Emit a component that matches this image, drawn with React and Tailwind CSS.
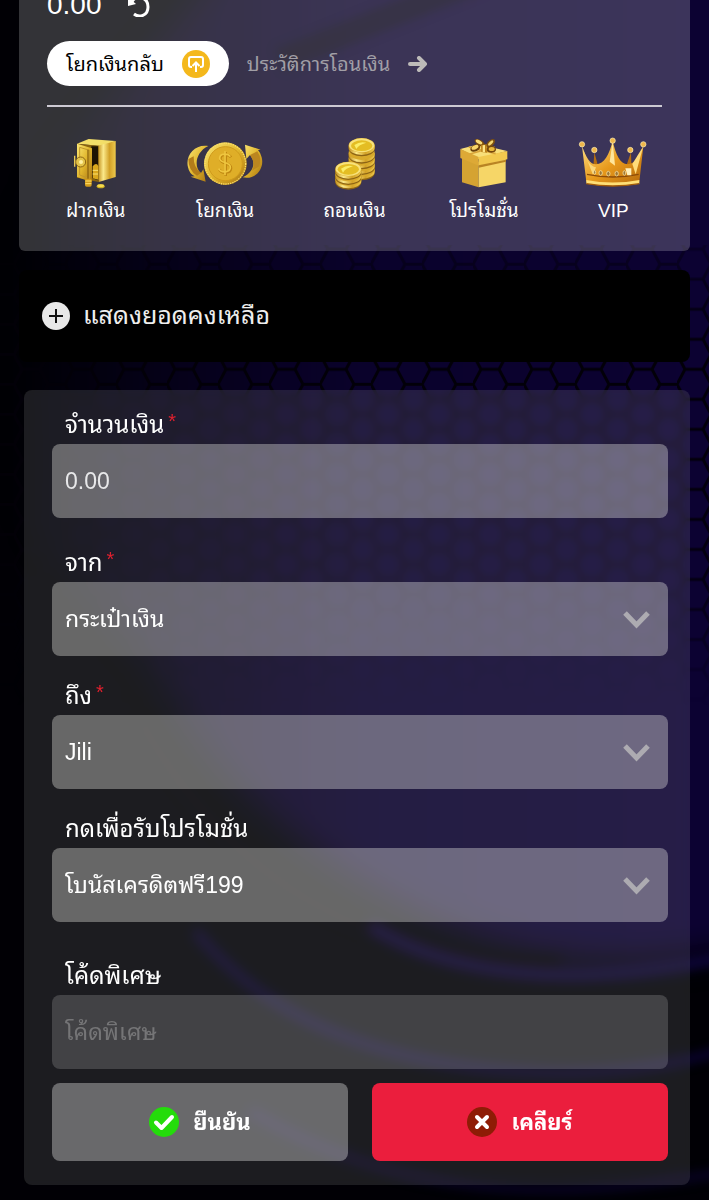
import React, { useState } from "react";

const THAI_FONT =
  "font-['Liberation_Sans','Noto_Sans_Thai_Looped','Loma','Garuda','Waree','Noto_Sans_Thai',sans-serif]";

const Backdrop = () => (
  <svg
    className="absolute inset-0 -z-10 h-full w-full"
    viewBox="0 0 709 1200"
    preserveAspectRatio="none"
    aria-hidden="true"
  >
    <defs>
      <linearGradient id="glow" gradientUnits="userSpaceOnUse" x1="20" x2="700" y1="0" y2="0">
        <stop offset="0" stopColor="#0b022f" stopOpacity="0" />
        <stop offset="0.2" stopColor="#0b022f" stopOpacity="0.45" />
        <stop offset="0.5" stopColor="#0b0230" stopOpacity="0.9" />
        <stop offset="1" stopColor="#0c0232" />
      </linearGradient>
      <linearGradient id="hexFade" x1="0" x2="0" y1="0" y2="1">
        <stop offset="0" stopColor="#fff" stopOpacity="0.3" />
        <stop offset="0.25" stopColor="#fff" />
        <stop offset="0.7" stopColor="#fff" stopOpacity="0.8" />
        <stop offset="1" stopColor="#fff" stopOpacity="0" />
      </linearGradient>
      <mask id="hexMask">
        <rect x="0" y="245" width="709" height="460" fill="url(#hexFade)" />
      </mask>
      <pattern
        id="hex"
        x="65"
        y="369"
        width="51"
        height="30"
        patternUnits="userSpaceOnUse"
      >
        <path
          d="M8 0H26L34 15L26 30H8L0 15ZM34 15H51"
          fill="none"
          stroke="#020008"
          strokeWidth="3"
        />
      </pattern>
      <filter
        id="soft"
        x="-20%"
        y="-20%"
        width="140%"
        height="140%"
        colorInterpolationFilters="sRGB"
      >
        <feGaussianBlur stdDeviation="16" />
      </filter>
      <filter
        id="soft2"
        x="-20%"
        y="-20%"
        width="140%"
        height="140%"
        colorInterpolationFilters="sRGB"
      >
        <feGaussianBlur stdDeviation="5" />
      </filter>
    </defs>
    <rect width="709" height="1200" fill="#010005" />
    <path
      d="M250 -60H780V935C640 975 520 960 420 910C300 850 215 780 150 660L20 520V200Z"
      fill="url(#glow)"
      filter="url(#soft)"
    />
    <rect width="709" height="1200" fill="url(#hex)" mask="url(#hexMask)" />
    <g fill="none" filter="url(#soft2)">
      <path d="M140 720C220 860 340 960 560 962" stroke="#020006" strokeWidth="14" />
      <path d="M280 60L480 -20" stroke="#020006" strokeWidth="24" strokeOpacity="0.5" />
      <path d="M370 925C450 975 570 990 730 955" stroke="#0c0434" strokeWidth="12" />
      <path d="M195 930C260 1010 370 1070 560 1072Q650 1072 720 1050" stroke="#08022a" strokeWidth="10" />
      <path d="M250 1110C400 1200 560 1200 720 1172" stroke="#070220" strokeWidth="10" />
    </g>
  </svg>
);

const GoldDefs = () => (
  <svg className="absolute h-0 w-0" aria-hidden="true">
    <defs>
      <linearGradient id="gold" x1="0" x2="1" y1="0" y2="1">
        <stop offset="0" stopColor="#fbe774" />
        <stop offset="0.5" stopColor="#e0b52c" />
        <stop offset="1" stopColor="#a87310" />
      </linearGradient>
      <linearGradient id="goldSide" x1="0" x2="1" y1="0" y2="0">
        <stop offset="0" stopColor="#c18e1d" />
        <stop offset="0.3" stopColor="#fbe98a" />
        <stop offset="0.65" stopColor="#d2a127" />
        <stop offset="1" stopColor="#edc94c" />
      </linearGradient>
      <linearGradient id="orange" x1="0" x2="1" y1="0" y2="1">
        <stop offset="0" stopColor="#ffe28a" />
        <stop offset="0.5" stopColor="#e89a1c" />
        <stop offset="1" stopColor="#b3670b" />
      </linearGradient>
    </defs>
  </svg>
);

const SafeIcon = () => (
  <svg className="h-[55px]" viewBox="98 35 141 165" aria-hidden="true">
    <path d="M113 58L148 44L229 50L190 66Z" fill="#f3de68" />
    <path d="M176 64L229 50V158L178 173Z" fill="url(#goldSide)" />
    <path d="M113 58L178 64V173L113 160Z" fill="#8a640f" />
    <path d="M156 66L176 66V168L156 160Z" fill="#1d1203" />
    <path d="M113 58L158 72V174L113 158Z" fill="url(#gold)" />
    <path d="M121 69L151 78V163L121 152Z" fill="none" stroke="#c2972a" strokeWidth="3" />
    <path d="M146 76V165" stroke="#8d6510" strokeWidth="4" />
    <circle cx="124" cy="113" r="15" fill="#e3c44b" stroke="#8d6510" strokeWidth="3" />
    <circle cx="125" cy="113" r="6" fill="#fff0a0" />
    <path d="M106 94V127" stroke="#e8ca55" strokeWidth="4" />
    <path d="M160 126Q172 112 177 126V166L160 162Z" fill="#daa71d" />
    <path d="M160 138H176M160 149H176" stroke="#fae174" strokeWidth="3" />
    <rect x="137" y="163" width="20" height="24" rx="5" fill="#d29c1b" />
    <path d="M138 170H156M138 178H156" stroke="#ffe26c" strokeWidth="3" />
    <ellipse cx="184" cy="186" rx="12" ry="6" fill="#ceb024" />
    <ellipse cx="184" cy="184" rx="10" ry="4" fill="#f5da4e" />
  </svg>
);

const TransferIcon = () => (
  <svg className="h-[55px]" viewBox="440 35 235 165" aria-hidden="true">
    <path
      d="M507 65C466 58 437 94 446 129Q450 149 466 156L454 157L499 172L492 135L485 146C463 129 468 83 507 65Z"
      fill="url(#gold)"
    />
    <path d="M447 104Q447 138 473 154L485 146Q462 130 463 96Z" fill="#b37d1a" />
    <path
      d="M610 159C650 168 676 131 667 99Q663 84 656 77L664 76L617 61L621 104L632 92C650 112 645 143 610 159Z"
      fill="url(#gold)"
    />
    <path d="M632 92Q650 116 638 139L660 126Q668 101 654 81Z" fill="#bb8620" />
    <circle cx="558" cy="118" r="64" fill="url(#gold)" />
    <circle cx="558" cy="118" r="61" fill="none" stroke="#f8dc68" strokeWidth="4" strokeDasharray="4 3" />
    <circle cx="558" cy="118" r="51" fill="#dfae28" stroke="#cf9a1b" strokeWidth="3" />
    <path
      d="M575 99C568 88 543 88 543 104C543 121 575 112 575 131C575 148 547 149 540 135M559 83V155"
      fill="none"
      stroke="#c08812"
      strokeWidth="8"
    />
    <path
      d="M573 97C566 86 541 86 541 102C541 119 573 110 573 129C573 146 545 147 538 133M557 81V153"
      fill="none"
      stroke="#efc63f"
      strokeWidth="5"
    />
  </svg>
);

const Coin = ({ x, y, top }) => (
  <g transform={`translate(${x} ${y})`}>
    <path d="M-39 0V8A39 22 0 0 0 39 8V0Z" fill="#8d6414" />
    <path d="M-39 -2V4A39 22 0 0 0 39 4V-2Z" fill="url(#goldSide)" />
    <ellipse cy="-3" rx="39" ry="22" fill="#d8a92b" />
    {top && <ellipse cy="-3" rx="38" ry="21" fill="#f8e27b" />}
    {top && <ellipse cy="-2" rx="32" ry="16" fill="#e4bd23" />}
    {top && <path d="M-22 -4Q-5 -16 14 -11Q-9 -5 -16 8Z" fill="#fbed67" />}
  </g>
);

const CoinsIcon = () => (
  <svg className="h-[55px]" viewBox="95 35 135 165" aria-hidden="true">
    <Coin x={184} y={138} />
    <Coin x={184} y={122} />
    <Coin x={184} y={105} />
    <Coin x={184} y={88} />
    <Coin x={184} y={66} top />
    <Coin x={144} y={166} />
    <Coin x={144} y={152} />
    <Coin x={144} y={137} top />
  </svg>
);

const GiftIcon = () => (
  <svg className="h-[55px]" viewBox="476 35 150 165" aria-hidden="true">
    <path d="M480 74L535 60L620 80L534 104Z" fill="#f8df79" />
    <path d="M485 96L535 112V189L485 174Z" fill="#d5a332" />
    <path d="M535 112L616 96V174L535 189Z" fill="#f6d667" />
    <path d="M480 74L535 98V124L480 101Z" fill="#dda936" />
    <path d="M535 98L621 80V105L535 124Z" fill="#f2c94e" />
    <path d="M535 123L617 106V112L535 130Z" fill="#b98423" />
    <path d="M505 68L586 88M583 68L509 89" stroke="#d9a43a" strokeWidth="5" />
    <ellipse cx="525" cy="71" rx="16" ry="10" fill="#6d430c" transform="rotate(-25 525 71)" />
    <ellipse cx="524" cy="69" rx="11" ry="6" fill="#f9d76b" transform="rotate(-25 524 69)" />
    <ellipse cx="538" cy="55" rx="17" ry="8" fill="#7b4c0c" transform="rotate(30 538 55)" />
    <ellipse cx="536" cy="53" rx="11" ry="5" fill="#f9dc78" transform="rotate(30 536 53)" />
    <ellipse cx="571" cy="57" rx="16" ry="9" fill="#80510d" transform="rotate(-45 571 57)" />
    <ellipse cx="571" cy="56" rx="10" ry="4" fill="#f6d973" transform="rotate(-45 571 56)" />
    <ellipse cx="573" cy="75" rx="14" ry="10" fill="#75480c" />
    <ellipse cx="574" cy="74" rx="9" ry="6" fill="#e9b83c" />
    <path d="M542 62L559 60L560 85L543 83Z" fill="#b97e16" />
    <path d="M547 63L554 62V84L547 83Z" fill="#ffe687" />
  </svg>
);

const CrownIcon = () => (
  <svg className="h-[55px]" viewBox="112 35 215 165" aria-hidden="true">
    <path d="M164 84L175 124H206L260 124L274 84L276 145H160Z" fill="#b36c10" />
    <path
      d="M127 66C141 102 151 120 169 120C194 120 208 91 219 51C229 91 241 120 264 120C284 119 295 101 311 66L299 172Q219 198 140 172Z"
      fill="url(#orange)"
    />
    <path d="M127 66C141 110 151 126 169 129L160 152Z" fill="#fbd77a" />
    <path d="M219 51L210 112L226 124Z" fill="#ffe69b" />
    <path d="M311 66L278 119L288 150Z" fill="#ffdc7a" />
    <path d="M142 150Q219 166 297 150" fill="none" stroke="#8c4b08" strokeWidth="4" />
    <path d="M140 167Q219 182 299 167V178Q219 192 140 178Z" fill="#ffdf76" />
    <path d="M140 178Q219 192 299 178" fill="none" stroke="#a25a08" strokeWidth="4" />
    <g fill="#9c7635" stroke="#fff0b8" strokeWidth="2">
      <ellipse cx="165" cy="144" rx="3" ry="6" />
      <ellipse cx="183" cy="146" rx="5" ry="7" />
      <ellipse cx="206" cy="148" rx="5" ry="7" />
      <ellipse cx="231" cy="148" rx="5" ry="7" />
      <ellipse cx="254" cy="146" rx="4" ry="7" />
    </g>
    <path d="M257 132H275V153H263Z" fill="#fff0bc" />
    <g fill="#efb74b" stroke="#fff0b8" strokeWidth="2">
      <circle cx="127" cy="60" r="8" />
      <circle cx="164" cy="77" r="8" />
      <circle cx="219" cy="49" r="8" />
      <circle cx="272" cy="77" r="8" />
      <circle cx="311" cy="60" r="8" />
    </g>
  </svg>
);

const menuItems = [
  { label: "ฝากเงิน", Icon: SafeIcon },
  { label: "โยกเงิน", Icon: TransferIcon },
  { label: "ถอนเงิน", Icon: CoinsIcon },
  { label: "โปรโมชั่น", Icon: GiftIcon },
  { label: "VIP", Icon: CrownIcon },
];

const FieldLabel = ({ htmlFor, required, children }) => (
  <label
    htmlFor={htmlFor}
    className="flex h-10 items-center gap-1 pt-0.5 pl-[13px] text-[24px] text-white"
  >
    {children}
    {required && (
      <span className="self-start text-[20px] text-[#e0202f]">*</span>
    )}
  </label>
);

const SelectField = ({ id, label, required, options }) => (
  <div>
    <FieldLabel htmlFor={id} required={required}>
      {label}
    </FieldLabel>
    <div className="relative">
      <select
        id={id}
        className="h-[74px] w-full appearance-none rounded-lg bg-[#f8f8f4]/34 pr-16 pl-[13px] text-[23px] text-white outline-none"
      >
        {options.map((option) => (
          <option key={option}>{option}</option>
        ))}
      </select>
      <svg
        className="pointer-events-none absolute top-7 right-[18px] h-[19px] w-[27px]"
        viewBox="0 0 27 19"
        aria-hidden="true"
      >
        <path
          d="M2 3L13.5 15L25 3"
          fill="none"
          stroke="#adabb1"
          strokeWidth="5"
        />
      </svg>
    </div>
  </div>
);

const BalanceCard = () => (
  <section className="-mt-3 rounded-md bg-white/20 pb-6">
    <div className="px-7">
      <div className="flex h-[33px] items-center gap-6 text-[28px] leading-8 text-white">
        0.00
        <button type="button" aria-label="รีเฟรช">
          <svg className="h-6 w-6" viewBox="0 0 24 24" fill="none" stroke="#fff" strokeWidth="3" aria-hidden="true">
            <path d="M6 9C9 2 22 3 22 14C22 23 13 25 8 21" />
            <path d="M2 4V13L10 11Z" fill="#fff" stroke="none" />
          </svg>
        </button>
      </div>
      <div className="mt-5 flex items-center gap-[18px]">
        <button
          type="button"
          className="flex h-[45px] items-center gap-[18px] rounded-full bg-white px-[19px] text-[20px] text-black"
        >
          โยกเงินกลับ
          <svg className="h-7 w-7" viewBox="0 0 28 28" fill="none" aria-hidden="true">
            <circle cx="14" cy="14" r="14" fill="#f4b81c" />
            <path
              d="M10 17H9Q7 17 7 15V9Q7 7 9 7H19Q21 7 21 9V15Q21 17 19 17H18M14 22V13M10.500 16L14 12.500L17.500 16"
              stroke="#fff"
              strokeWidth="2"
            />
          </svg>
        </button>
        <a href="#history" className="flex items-center gap-[18px] text-[20px] text-[#a19fa6]">
          ประวัติการโอนเงิน
          <svg className="h-4 w-5" viewBox="0 0 20 16" fill="none" aria-hidden="true">
            <path
              d="M2 8H17M11 2L17 8L11 14"
              stroke="#bdbbb9"
              strokeWidth="4"
              strokeLinecap="round"
              strokeLinejoin="round"
            />
          </svg>
        </a>
      </div>
      <hr className="mt-[19px] border-t-2 border-[#cdcad3]" />
    </div>
    <nav className="mt-[29px] grid grid-cols-5 px-3">
      {menuItems.map(({ label, Icon }) => (
        <a
          key={label}
          href="#menu"
          className="flex flex-col items-center gap-1 text-[19px] leading-8 whitespace-nowrap text-white"
        >
          <Icon />
          {label}
        </a>
      ))}
    </nav>
  </section>
);

const TransferForm = () => {
  const [amount, setAmount] = useState("0.00");
  const [code, setCode] = useState("");

  return (
    <form
      className="mt-7 ml-[5px] rounded-lg bg-white/11 pt-[14px] pr-[22px] pb-6 pl-7 backdrop-blur-xs"
      onSubmit={(e) => e.preventDefault()}
    >
      <FieldLabel htmlFor="amount" required>
        จำนวนเงิน
      </FieldLabel>
      <input
        id="amount"
        value={amount}
        onChange={(e) => setAmount(e.target.value)}
        className="block h-[74px] w-full rounded-lg bg-[#f8f8f4]/34 px-[13px] text-[23px] text-[#e8e8ea] outline-none"
      />

      <div className="mt-6 flex flex-col gap-[19px]">
        <SelectField id="from" label="จาก" required options={["กระเป๋าเงิน"]} />
        <SelectField id="to" label="ถึง" required options={["Jili"]} />
        <SelectField
          id="promotion"
          label="กดเพื่อรับโปรโมชั่น"
          options={["โบนัสเครดิตฟรี199"]}
        />
      </div>

      <div className="mt-[33px]">
        <FieldLabel htmlFor="code">โค้ดพิเศษ</FieldLabel>
        <input
          id="code"
          value={code}
          onChange={(e) => setCode(e.target.value)}
          placeholder="โค้ดพิเศษ"
          className="block h-[74px] w-full rounded-lg bg-white/17 px-[13px] text-[23px] text-white outline-none placeholder:text-[#757577]"
        />
      </div>

      {/* Actions */}
      <div className="mt-[14px] grid grid-cols-2 gap-6 text-[22px] font-bold text-white">
        <button
          type="submit"
          className="flex h-[78px] items-center justify-center gap-[14px] rounded-lg bg-white/34"
        >
          <svg className="h-[30px] w-[30px]" viewBox="0 0 30 30" fill="none" aria-hidden="true">
            <circle cx="15" cy="15" r="15" fill="#24dc0b" />
            <path d="M7 15.500L12.500 21L23 10" stroke="#fff" strokeWidth="4" strokeLinecap="round" strokeLinejoin="round" />
          </svg>
          ยืนยัน
        </button>
        <button
          type="reset"
          onClick={() => {
            setAmount("0.00");
            setCode("");
          }}
          className="flex h-[78px] items-center justify-center gap-[14px] rounded-lg bg-[#eb1e3d]"
        >
          <svg className="h-[30px] w-[30px]" viewBox="0 0 30 30" fill="none" aria-hidden="true">
            <circle cx="15" cy="15" r="15" fill="#8e1c05" />
            <path d="M10 10L20 20M20 10L10 20" stroke="#fff" strokeWidth="4" strokeLinecap="round" />
          </svg>
          เคลียร์
        </button>
      </div>
    </form>
  );
};

const App = () => (
  <main
    className={`relative isolate min-h-screen overflow-hidden px-[19px] pb-4 ${THAI_FONT}`}
    lang="th"
  >
    <Backdrop />
    <GoldDefs />
    <BalanceCard />

    <button
      type="button"
      className="mt-[19px] flex h-[92px] w-full items-center gap-[13px] rounded-lg bg-black px-[23px] text-[25px] text-[#eeeeee]"
    >
      <svg className="h-7 w-7" viewBox="0 0 28 28" aria-hidden="true">
        <circle cx="14" cy="14" r="14" fill="#e8e8e8" />
        <path d="M14 7V21M7 14H21" stroke="#111" strokeWidth="2" />
      </svg>
      แสดงยอดคงเหลือ
    </button>

    <TransferForm />
  </main>
);

export default App;
